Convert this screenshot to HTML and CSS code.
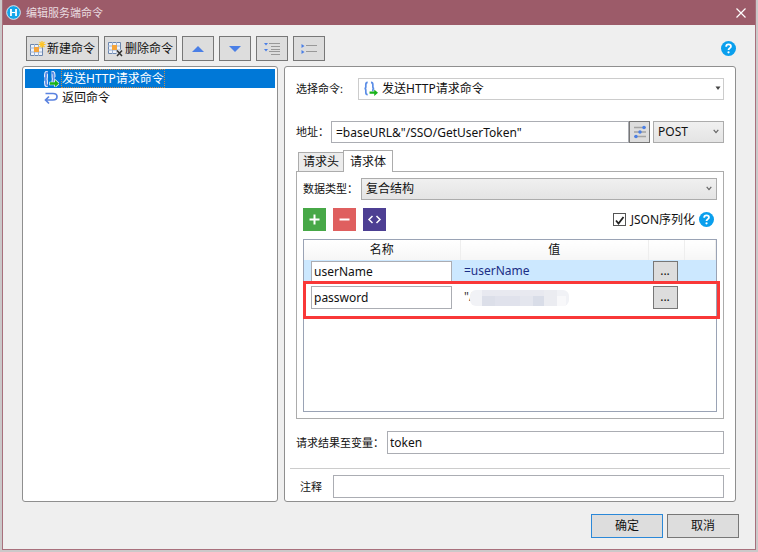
FILE: index.html
```html
<!DOCTYPE html>
<html lang="zh-CN">
<head>
<meta charset="utf-8">
<meta name="viewport" content="width=device-width, initial-scale=1">
<title>编辑服务端命令</title>
<link rel="stylesheet" href="styles.css">
</head>
<body>
<svg class="defs" aria-hidden="true">
  <symbol id="i-request" viewBox="0 0 16 16">
    <path class="halo" d="M5 1.500C3.300 1.500 3 2.300 3 4v2c0 1.200-.5 2-1.500 2C2.500 8 3 8.800 3 10v2c0 1.700.3 2.500 2 2.500M8.500 1.500c1.700 0 2 .8 2 2.500v2c0 1.200.5 2 1.500 2-1 0-1.500.8-1.500 2v4" fill="none" stroke-width="4"/>
    <path d="M5 1.500C3.300 1.500 3 2.300 3 4v2c0 1.200-.5 2-1.500 2C2.500 8 3 8.800 3 10v2c0 1.700.3 2.500 2 2.500M8.500 1.500c1.700 0 2 .8 2 2.500v2c0 1.200.5 2 1.500 2-1 0-1.500.8-1.500 2v1" fill="none" stroke="#5b8de6" stroke-width="1.800"/>
    <path class="halo" d="M7 11.500h5V9l4 3.500-4 3.500v-2.500H7z" fill="none" stroke-width="1.500"/>
    <path d="M7 11.300h5V9l4 3.500-4 3.500v-2.300H7z" fill="#18b21b"/>
  </symbol>
  <symbol id="i-help" viewBox="0 0 16 16">
    <circle cx="8" cy="8" r="8" fill="#0a9fed"/>
    <path d="M5.500 6.100C5.500 4.300 6.600 3.700 8 3.700s2.600.7 2.600 2.100C10.600 7.500 8 7.700 8 9.700" fill="none" stroke="#fff" stroke-width="1.900"/>
    <circle cx="8" cy="12" r="1.200" fill="#fff"/>
  </symbol>
  <symbol id="i-chevron" viewBox="0 0 6 5">
    <path d="M.7.8 3 3.600 5.300.8" fill="none" stroke="#666" stroke-width="1.200"/>
  </symbol>
</svg>

<div class="window">
  <header class="titlebar">
    <svg class="logo" viewBox="0 0 16 16"><circle cx="8" cy="8" r="7.300" fill="#12a5ea" stroke="#d9f1fc" stroke-width="1"/><path d="M5.300 4.300v7.400M10.700 4.300v7.400" stroke="#fff" stroke-width="1.900"/><path d="M6 8h4" stroke="#fff" stroke-width="1.200"/></svg>
    <h1>编辑服务端命令</h1>
    <button class="close" aria-label="关闭"><svg viewBox="0 0 10 10"><path d="M.5.500l9 9M9.500.500l-9 9" stroke="#fff" stroke-width="1.200"/></svg></button>
  </header>

  <main class="content">
    <div class="toolbar">
      <button class="btn tool wide">
        <svg class="icon" viewBox="0 0 16 16"><path d="M.5 3.500h12v11H.5z" fill="#eef3fb" stroke="#6c87ae"/><path d="M4.500 3v12M8.500 3v12M0 7h12M0 11h12" stroke="#9db2d2"/><path d="M4 6h5v5H4z" fill="#f5a43a"/><path d="M12 0v7M8.500 3.500h7M9.500 1l5 5M14.500 1l-5 5" stroke="#ffc526" stroke-width="1.200"/></svg>
        新建命令</button>
      <button class="btn tool wide">
        <svg class="icon" viewBox="0 0 16 16"><path d="M.5 1.500h12v11H.5z" fill="#eef3fb" stroke="#6c87ae"/><path d="M4.500 1v12M8.500 1v12M0 5h12M0 9h12" stroke="#9db2d2"/><path d="M4 4h5v5H4z" fill="#f5a43a"/><path d="M9 9.500l5 5.500M14 9.500l-5 5.500" stroke="#ddd" stroke-width="3.500"/><path d="M9 9.500l5 5.500M14 9.500l-5 5.500" stroke="#333" stroke-width="1.500"/></svg>
        删除命令</button>
      <button class="btn tool" aria-label="上移"><svg class="icon" viewBox="0 0 16 16"><path d="M2 11l6-6 6 6z" fill="#4a7fe6"/></svg></button>
      <button class="btn tool" aria-label="下移"><svg class="icon" viewBox="0 0 16 16"><path d="M2 5l6 6 6-6z" fill="#4a7fe6"/></svg></button>
      <button class="btn tool" aria-label="全部展开"><svg class="icon" viewBox="0 0 16 16"><path d="M0 2h4L2 4.500zM0 8h4L2 10.500z" fill="#4a7fe6"/><path d="M5 2.500h11M7 5.500h9M7 8.500h9M5 10.500h11M7 13.500h9" stroke="#989898"/></svg></button>
      <button class="btn tool" aria-label="全部折叠"><svg class="icon" viewBox="0 0 16 16"><path d="M.5 3l3 2-3 2zM.5 9l3 2-3 2z" fill="#4a7fe6"/><path d="M5 4.500h11M5 10.500h11" stroke="#989898"/></svg></button>
      <button class="help" aria-label="帮助"><svg class="help-icon"><use href="#i-help"/></svg></button>
    </div>

    <div class="panes">
      <ul class="pane tree">
        <li class="node selected"><svg class="icon"><use href="#i-request"/></svg><span>发送HTTP请求命令</span></li>
        <li class="node"><svg class="icon" viewBox="0 0 16 16"><path d="M2.500 3.500h7.500c2.500 0 4 1.200 4 3s-1.500 3.500-4 3.500H3M6 6.500 2.500 10 6 13.500" fill="none" stroke="#5b83e0" stroke-width="1.700"/></svg><span>返回命令</span></li>
      </ul>

      <form class="pane form">
        <div class="row command-row">
          <label for="command">选择命令:</label>
          <div class="combo plain">
            <svg class="combo-icon"><use href="#i-request"/></svg>
            <select id="command"><option>发送HTTP请求命令</option></select>
            <svg class="arrow" viewBox="0 0 6 5"><path d="M.5.500h5L3 4z" fill="#444"/></svg>
          </div>
        </div>

        <div class="row address-row">
          <label for="address">地址：</label>
          <input class="field" id="address" type="text" value="=baseURL&amp;&quot;/SSO/GetUserToken&quot;">
          <button type="button" class="btn params" aria-label="参数"><svg class="icon" viewBox="0 0 16 16"><path d="M2 3.500h12M2 8h12M2 12.500h12" stroke="#a3a3a3" stroke-width="1.300"/><circle cx="12" cy="3.500" r="1.700" fill="#4a7fe6"/><circle cx="8" cy="8" r="1.700" fill="#4a7fe6"/><circle cx="4" cy="12.500" r="1.700" fill="#4a7fe6"/></svg></button>
          <div class="combo method">
            <select aria-label="请求方法"><option>POST</option></select>
            <svg class="arrow"><use href="#i-chevron"/></svg>
          </div>
        </div>

        <div class="tabs" role="tablist">
          <button type="button" class="tab" role="tab">请求头</button>
          <button type="button" class="tab active" role="tab" aria-selected="true">请求体</button>
        </div>
        <section class="tab-body">
          <div class="row">
            <label for="datatype">数据类型：</label>
            <div class="combo">
              <select id="datatype"><option>复合结构</option></select>
              <svg class="arrow"><use href="#i-chevron"/></svg>
            </div>
          </div>
          <div class="row actions">
            <button type="button" class="square add" aria-label="添加"><svg viewBox="0 0 23 23"><path d="M6.500 11.500h10M11.500 6.500v10" stroke-width="2"/></svg></button>
            <button type="button" class="square remove" aria-label="删除"><svg viewBox="0 0 23 23"><path d="M6.500 11.500h10" stroke-width="2"/></svg></button>
            <button type="button" class="square code" aria-label="代码"><svg viewBox="0 0 23 23"><path d="M9.500 8 6 11.500 9.500 15M13.500 8l3.500 3.500-3.500 3.500" stroke-width="1.500"/></svg></button>
            <label class="check"><input type="checkbox" checked><svg class="tick" viewBox="0 0 13 13"><path d="M3 6.500l2.500 3L10.500 3" fill="none" stroke="#222" stroke-width="1.800"/></svg>JSON序列化</label>
            <button type="button" class="help" aria-label="帮助"><svg class="help-icon"><use href="#i-help"/></svg></button>
          </div>
          <div class="grid">
            <table>
              <colgroup><col class="c-name"><col><col class="c-more"><col class="c-end"></colgroup>
              <thead><tr><th>名称</th><th>值</th><th></th><th></th></tr></thead>
              <tbody>
                <tr class="current">
                  <td><input class="field" type="text" aria-label="名称" value="userName"></td>
                  <td class="value">=userName</td>
                  <td><button type="button" class="btn more">...</button></td><td></td>
                </tr>
                <tr>
                  <td><input class="field" type="text" aria-label="名称" value="password"></td>
                  <td class="value"><div class="secret">"/<svg class="mask" viewBox="0 0 100 18" preserveAspectRatio="none"><rect y="1" width="99" height="16" rx="6" fill="#f1f2f6"/><path d="M12 1h64v6H12z" fill="#e8e9f0"/><path d="M12 7h13v10H12z" fill="#dcdfe9"/><path d="M25 7h25v10H25z" fill="#e0e2ec"/><path d="M50 7h13v10H50z" fill="#e4e6ee"/><path d="M63 7h11v10H63z" fill="#d9dde8"/><path d="M74 1h13v16H74z" fill="#ebecf1"/><path d="M87 7h9v10h-9z" fill="#f8f8fa"/></svg></div></td>
                  <td><button type="button" class="btn more">...</button></td><td></td>
                </tr>
              </tbody>
            </table>
            <div class="highlight"></div>
          </div>
        </section>

        <div class="row result-row">
          <label for="result">请求结果至变量：</label>
          <input class="field" id="result" type="text" value="token">
        </div>
        <hr>
        <div class="row note-row">
          <label for="note">注释</label>
          <input class="field" id="note" type="text">
        </div>
      </form>
    </div>

    <footer class="footer">
      <button class="btn action primary">确定</button>
      <button class="btn action">取消</button>
    </footer>
  </main>
</div>
</body>
</html>
```
FILE: styles.css
```css
* { box-sizing: border-box; }

body {
  margin: 0;
  padding: 0 2px 2px;
  min-height: 100vh;
  display: flex;
  background: #cbc8c9;
  color: #111;
  font: 12px/16px "Noto Sans", "Noto Sans CJK SC", sans-serif;
}

button, input, select { font: inherit; color: inherit; margin: 0; }
button { padding: 0; border: 0; background: none; }
svg { display: block; flex: none; }
.defs { position: absolute; width: 0; height: 0; }
.icon { width: 16px; height: 16px; }
.halo { stroke: var(--halo, none); }

.window {
  flex: 1;
  min-width: 0;
  display: flex;
  flex-direction: column;
  background: #efefef;
  border: 1px solid #a8707c;
  border-top: 0;
}

.titlebar {
  display: flex;
  align-items: center;
  gap: 5px;
  height: 25px;
  padding: 0 9px 0 3px;
  background: #9c5b69;
  color: #eadde0;
}
.titlebar h1 { margin: 0; flex: 1; font-size: 11px; font-weight: 400; }
.logo { width: 15px; height: 15px; }
.close svg { width: 10px; height: 10px; }

.content {
  flex: 1;
  display: flex;
  flex-direction: column;
  padding: 11px 19px 11px;
}

.btn {
  display: flex;
  align-items: center;
  justify-content: center;
  background: #ddd;
  border: 1px solid #777;
}

.toolbar { display: flex; align-items: center; gap: 5px; padding-left: 4px; }
.tool { width: 32px; height: 25px; }
.tool.wide { width: 73px; gap: 1px; white-space: nowrap; }
.toolbar .help { margin-left: auto; }
.help-icon { width: 15px; height: 15px; }

.panes {
  flex: 1;
  display: grid;
  grid-template-columns: minmax(0, 256fr) minmax(0, 452fr);
  gap: 6px;
  margin: 5px 0 12px;
}
.pane {
  margin: 0;
  background: #fff;
  border: 1px solid #8f8f8f;
  border-radius: 3px;
}

.tree { padding: 2px; list-style: none; }
.node { display: flex; align-items: center; gap: 2px; height: 19px; padding-left: 18px; }
.node span { line-height: 17px; border: 1px solid transparent; }
.selected { --halo: #dfeaf8; background: #0078d7; color: #fff; }
.selected span { border: 1px dotted #c98a4a; }

.form { display: flex; flex-direction: column; padding: 11px 11px 3px; }
.row { display: flex; align-items: center; }
.row label { flex: none; font-size: 11px; }

.field {
  flex: 1;
  min-width: 0;
  height: 23px;
  padding: 0 2px;
  border: 1px solid #abadb3;
  border-radius: 0;
  background: #fff;
}

.combo { position: relative; flex: 1; }
.combo select {
  display: block;
  appearance: none;
  width: 100%;
  height: 22px;
  padding: 0 18px 0 4px;
  border: 1px solid #acacac;
  border-radius: 0;
  background: linear-gradient(#f0f0f0, #e4e4e4);
}
.combo.plain select { padding-left: 23px; background: #fff; border-color: #ccc; }
.combo-icon { position: absolute; left: 5px; top: 3px; width: 15px; height: 15px; }
.arrow { position: absolute; right: 5px; top: 8px; width: 6px; height: 5px; pointer-events: none; }
.plain .arrow { right: 3px; }

.command-row label { width: 62px; }
.address-row { margin-top: 21px; }
.address-row label { width: 35px; }
.address-row .field { height: 22px; padding-left: 4px; }
.params { width: 21px; height: 22px; }
.combo.method { flex: none; width: 71px; margin-left: 3px; }

.tabs { display: flex; align-items: flex-end; margin-top: 7px; padding-left: 2px; }
.tab {
  height: 19px;
  padding: 0 4px;
  border: 1px solid #acacac;
  border-bottom: 0;
  background: #ececec;
}
.tab.active { position: relative; height: 22px; margin: 0 0 -1px -1px; padding: 0 6px; background: #fff; }

.tab-body {
  flex: 1;
  display: flex;
  flex-direction: column;
  padding: 6px;
  border: 1px solid #acacac;
}
.tab-body .row label { min-width: 58px; }

.actions { gap: 7px; margin: 8px 0; }
.square { width: 23px; height: 23px; }
.square svg { width: 23px; height: 23px; fill: none; stroke: #fff; }
.add { background: #47a847; }
.remove { background: #df5f5f; }
.code { background: #4d3f93; }
.row .check { position: relative; display: flex; align-items: center; gap: 5px; margin-left: auto; font-size: 12px; }
.check input { appearance: none; width: 13px; height: 13px; margin: 0; border: 1px solid #555; background: #fff; }
.tick { position: absolute; left: 0; top: 2px; width: 13px; height: 13px; pointer-events: none; }
.actions .help { margin: 0 3px 0 -3px; }

.grid { position: relative; flex: 1; min-height: 160px; border: 1px solid #9aa3b5; background: #fff; }
table { width: 100%; table-layout: fixed; border-collapse: collapse; }
.c-name { width: 156px; }
.c-more { width: 36px; }
.c-end { width: 31px; }
th {
  height: 20px;
  padding: 0;
  border-right: 1px solid #eee;
  background: linear-gradient(#fff, #f6f6f6);
  font-weight: 400;
}
td { height: 30px; padding: 0 4px; }
td .field { display: block; width: 141px; margin-left: 3px; }
.current { background: #cce8ff; }
.current td { height: 22px; }
.current .field, .current .more { height: 21px; }
.value { color: #1b2f86; }
.more { width: 25px; height: 23px; color: #111; }
.secret { position: relative; color: #333; }
.mask { position: absolute; left: 6px; top: 0; width: 100px; height: 18px; }
.highlight { position: absolute; left: -1px; right: -4px; top: 41px; height: 38px; border: 3px solid #f93838; pointer-events: none; }

.result-row { margin-top: 12px; }
.result-row label { width: 91px; }
hr { width: auto; margin: 14px -6px 6px; border: 0; border-top: 1px solid #ccc; }
.note-row label { width: 37px; padding-left: 4px; }

.footer { display: flex; justify-content: flex-end; gap: 4px; margin-right: -3px; }
.action { width: 72px; height: 24px; }
.primary { border-color: #2b88d8; }
```
